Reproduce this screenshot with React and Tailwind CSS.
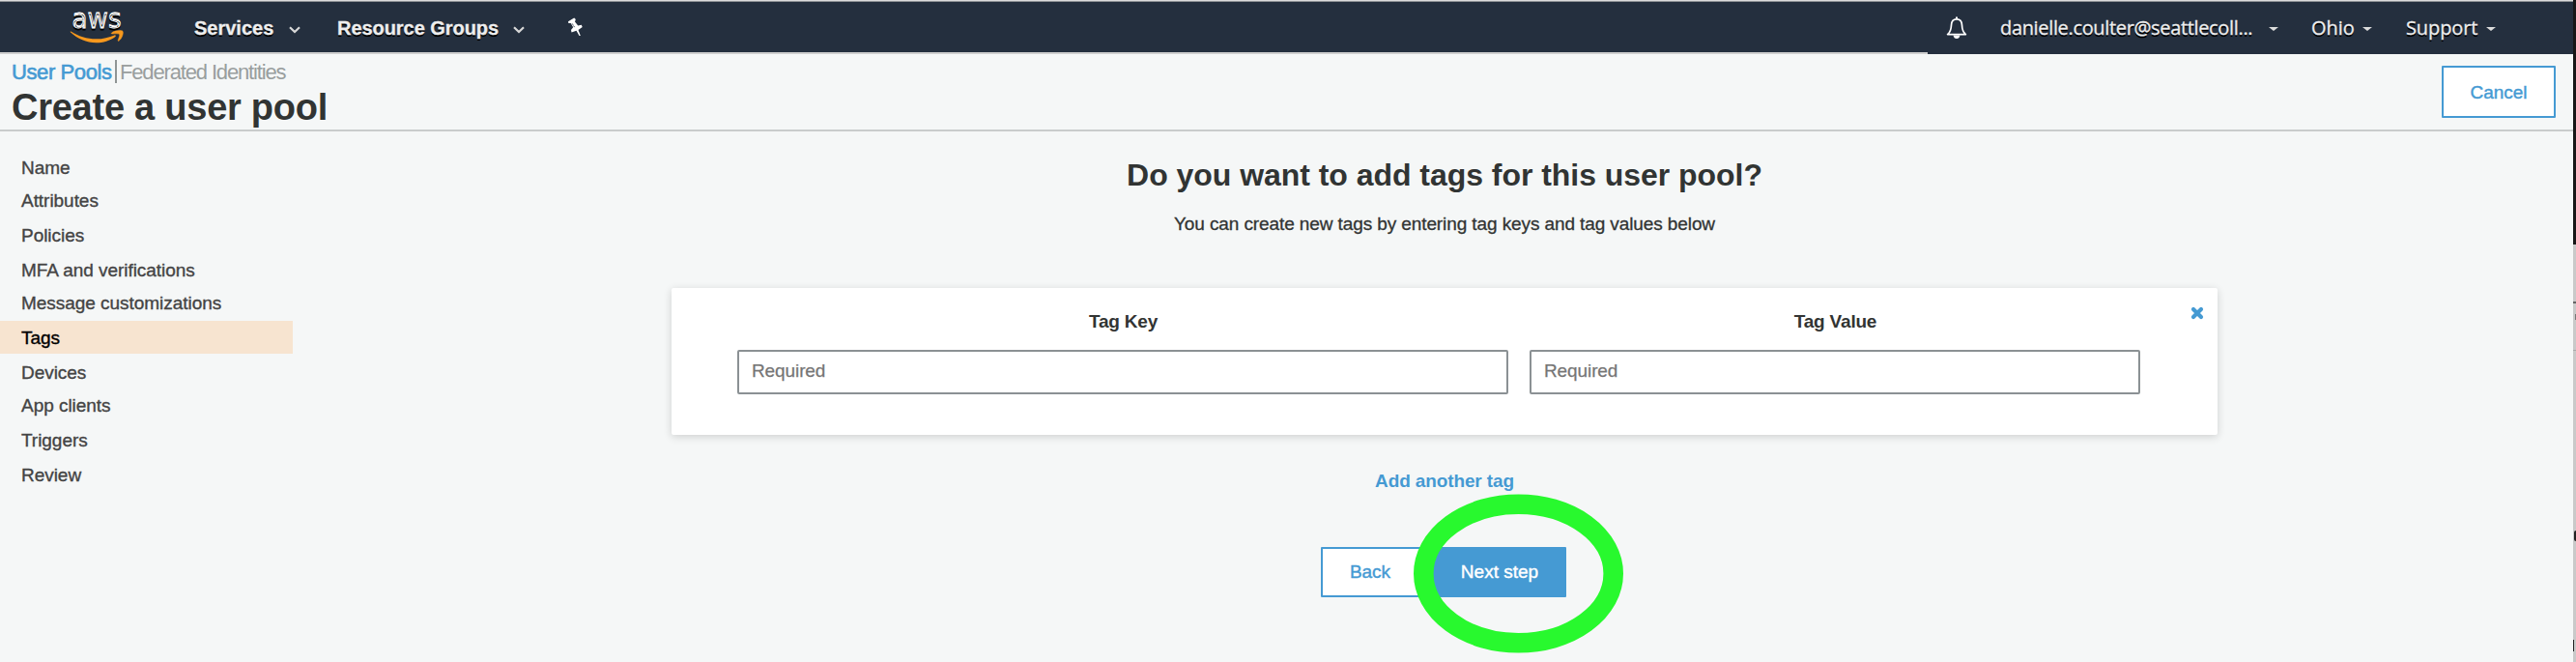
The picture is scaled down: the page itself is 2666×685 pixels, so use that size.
const steps = [
  { label: "Name" },
  { label: "Attributes", gap: true },
  { label: "Policies", gap: true },
  { label: "MFA and verifications" },
  { label: "Message customizations", gap: true },
  { label: "Tags", gap: true, active: true },
  { label: "Devices" },
  { label: "App clients", gap: true },
  { label: "Triggers", gap: true },
  { label: "Review" },
];

function AwsLogo() {
  return (
    <svg className="ml-[72px] h-[52px] w-[57px] shrink-0 overflow-visible" viewBox="72 2 57 52">
      <text x="74.500" y="28.500" fontSize="28.500" fill="#fff" stroke="#fff" strokeWidth="0.800" textLength="51" lengthAdjust="spacingAndGlyphs" fontFamily="'DejaVu Sans', sans-serif">aws</text>
      <path d="M73.500 32.500C81 37.600 90 40.300 99.500 40.300c7 0 13.300-1.500 19-3.900 1.100-.4 1.900.8.9 1.600-5.400 4.200-12.900 6.300-19.700 6.300-10.300 0-19.500-4.200-26.600-10.700-.7-.7-.3-1.500.4-1.100z" fill="#f7981d" />
      <path d="M115.500 34c3-2.600 10.200-2.900 11.400-1.800 1.200 1.500-.4 7.500-3.700 9.900-.8.600-1.400.2-1-.7.700-1.900 2-5 1.300-5.900-.7-.9-4.600-.7-7-.4-.9.1-1.700-.4-1-1.100z" fill="#f7981d" stroke="#f7981d" strokeWidth="0.500" />
    </svg>
  );
}

function Chevron({ className }) {
  return (
    <svg className={`h-[8px] w-[12px] shrink-0 ${className}`} viewBox="0 0 12 8">
      <path d="M1 1.200 6 6l5-4.800" fill="none" stroke="#d8d8d8" strokeWidth="2.200" />
    </svg>
  );
}

function Caret({ className }) {
  return (
    <svg className={`h-[4px] w-[10px] shrink-0 ${className}`} viewBox="0 0 10 4">
      <path d="M0 0h10L5 4z" fill="#dcdcdc" />
    </svg>
  );
}

function TagField({ label, width }) {
  return (
    <div className={`flex flex-col items-center ${width}`}>
      <div className="h-[24px] pl-px text-[19px] leading-[26px] font-bold tracking-[-0.2px] text-[#323433]">{label}</div>
      <div className="mt-[18px] flex h-[46px] w-full items-center rounded-[2px] border-2 border-[#8b9194] pb-px pl-[13px] text-[19px] tracking-[-0.1px] text-[#757575] [-webkit-text-stroke:0.25px]">
        Required
      </div>
    </div>
  );
}

export default function App() {
  return (
    <div className="relative flex h-[685px] w-[2666px] overflow-hidden bg-[#f5f7f7] font-['Liberation_Sans',Arial,sans-serif] text-[#444]">
      <div className="flex w-[2663px] shrink-0 flex-col">
        <div className="h-[2px] border-b border-[#8f9296] bg-[#dcdcdc]" />
        <nav className="flex h-[52px] items-center bg-[#242f3e] text-[20px] text-[#eee] [text-shadow:0_2px_0_#000]">
          <AwsLogo />
          <div className="ml-[72px] w-[82px] pt-[2px] font-bold whitespace-nowrap [-webkit-text-stroke:0.3px]">Services</div>
          <Chevron className="mt-[6px] ml-[16px]" />
          <div className="ml-[38px] w-[168px] pt-[2px] font-bold tracking-[-0.05px] whitespace-nowrap [-webkit-text-stroke:0.3px]">Resource Groups</div>
          <Chevron className="mt-[6px] ml-[14px]" />
          <svg className="ml-[44px] h-[20px] w-[18px]" viewBox="0 0 18 20">
            <path d="M1 4.200 7.200.5 8.800 2 8 4.500l3.200 4 3.600-.7.900 2.200-4.200 2.900 2.300 6.100h-1.300l-3-5.200-5 1.600-.5-2.500 2.200-2.600L3.700 6 1.400 6z" fill="#fff" />
            <path d="M5.200 6.500 8 10.800" stroke="#242f3e" strokeWidth="1" strokeDasharray="1.500 1" />
          </svg>
          <div className="ml-auto flex items-center pt-px pr-[80px] font-['Open_Sans','Noto_Sans',sans-serif] font-medium [-webkit-text-stroke:0.3px]">
            <svg className="h-[24px] w-[22px]" viewBox="0 0 22 24">
              <path d="M11 2.800c-4 0-5.400 2.800-5.500 6.200-.2 4.800-1 7.400-3.900 9.600h18.800c-2.900-2.200-3.700-4.800-3.900-9.600-.1-3.400-1.500-6.200-5.500-6.200z" fill="none" stroke="#fff" strokeWidth="1.700" strokeLinejoin="round" />
              <path d="M10 .5h2v2h-2zM7.500 19.500h7c-.4 2.400-1.800 3.500-3.500 3.500s-3.100-1.100-3.500-3.500z" fill="#fff" />
            </svg>
            <div className="ml-[34px] w-[263px] tracking-[-0.34px] whitespace-nowrap">danielle.coulter@seattlecoll...</div>
            <Caret className="mt-[3px] ml-[15px]" />
            <div className="ml-[34px] w-[43px] whitespace-nowrap">Ohio</div>
            <Caret className="mt-[3px] ml-[10px]" />
            <div className="ml-[35px] w-[74px] tracking-[-0.1px] whitespace-nowrap">Support</div>
            <Caret className="mt-[3px] ml-[9px]" />
          </div>
        </nav>
        <div className="flex h-[2px] bg-[#242f3e]">
          <div className="w-[1995px] bg-[#cfcfcf]" />
        </div>
        <header className="flex h-[80px] justify-between border-b-2 border-[#c9cccc] pr-[18px] pl-[12px]">
          <div className="pt-[5px]">
            <div className="flex h-[26px] items-center text-[22px] leading-[28px]">
              <span className="w-[107px] pt-[2px] tracking-[-0.4px] whitespace-nowrap text-[#459ad3] [-webkit-text-stroke:0.6px_#459ad3]">User Pools</span>
              <span className="h-[24px] w-[2px] bg-[#8f9595]" />
              <span className="ml-[3px] pt-[2px] tracking-[-1.15px] whitespace-nowrap text-[#999e9e]">Federated Identities</span>
            </div>
            <h1 className="mt-[3px] text-[38px] leading-[42px] font-bold tracking-[-0.25px] text-[#313433]">Create a user pool</h1>
          </div>
          <button className="mt-[12px] h-[54px] w-[118px] rounded-[1px] border-2 border-[#459ad3] bg-white pt-[2px] text-[19px] text-[#459ad3] [-webkit-text-stroke:0.4px_#459ad3]">Cancel</button>
        </header>
        <div className="flex">
          <aside className="flex w-[303px] shrink-0 flex-col pt-[20px] text-[19px] leading-[36px] tracking-[-0.04px] [-webkit-text-stroke:0.35px]">
            {steps.map((s) => (
              <div key={s.label} className={`h-[34px] pl-[22px] ${s.gap ? "mb-[2px]" : ""} ${s.active ? "bg-[#f7e4d0] text-black" : ""}`}>
                {s.label}
              </div>
            ))}
          </aside>
          <main className="ml-[392px] flex w-[1600px] flex-col items-center">
            <h2 className="mt-[25px] h-[40px] text-[32px] leading-[40px] font-bold tracking-[-0.04px] text-[#313433]">Do you want to add tags for this user pool?</h2>
            <p className="mt-[18px] h-[24px] text-[19px] leading-[26px] tracking-[-0.1px] text-[#313433] [-webkit-text-stroke:0.3px]">
              You can create new tags by entering tag keys and tag values below
            </p>
            <section className="mt-[55px] flex h-[152px] w-[1600px] rounded-[2px] bg-white pt-[22px] pl-[68px] shadow-[0_2px_8px_rgba(0,0,0,0.16)]">
              <TagField label="Tag Key" width="w-[798px]" />
              <div className="w-[22px]" />
              <TagField label="Tag Value" width="w-[632px]" />
              <svg className="-mt-[3px] ml-[52px] h-[14px] w-[14px]" viewBox="0 0 14 14">
                <path d="M3 3l8 8M11 3l-8 8" stroke="#459ad3" strokeWidth="4.200" strokeLinecap="round" />
              </svg>
            </section>
            <a className="mt-[36px] h-[24px] text-[19px] leading-[24px] font-bold tracking-[-0.12px] text-[#459ad3]">Add another tag</a>
            <div className="mt-[56px] mr-[2px] flex h-[52px] w-[254px] justify-between text-[19px]">
              <button className="h-full w-[104px] rounded-[1px] border-2 border-[#459ad3] bg-white pr-[2px] text-[#459ad3] [-webkit-text-stroke:0.4px_#459ad3]">Back</button>
              <button className="h-full w-[138px] rounded-[1px] bg-[#459ad3] text-white [-webkit-text-stroke:0.4px_#fff]">Next step</button>
            </div>
          </main>
        </div>
      </div>
      <div className="flex w-[3px] flex-col bg-[#c9c9c9]">
        <div className="h-[253px] bg-[#171717]" />
        <div className="mt-[59px] h-[2px] bg-[#666]" />
        <div className="mt-[11px] ml-[2px] h-[6px] bg-[#777]" />
        <div className="mt-[31px] h-px bg-[#aaa]" />
        <div className="mt-[186px] ml-px h-[11px] rounded-l-full bg-[#222]" />
        <div className="mt-[102px] h-[12px] w-px bg-[#222]" />
      </div>
      <svg className="absolute top-[511px] left-[1463px] h-[165px] w-[217px]" viewBox="0 0 217 165">
        <ellipse cx="108.500" cy="82.500" rx="98.200" ry="71.800" fill="none" stroke="#28f92e" strokeWidth="20.600" />
      </svg>
    </div>
  );
}
